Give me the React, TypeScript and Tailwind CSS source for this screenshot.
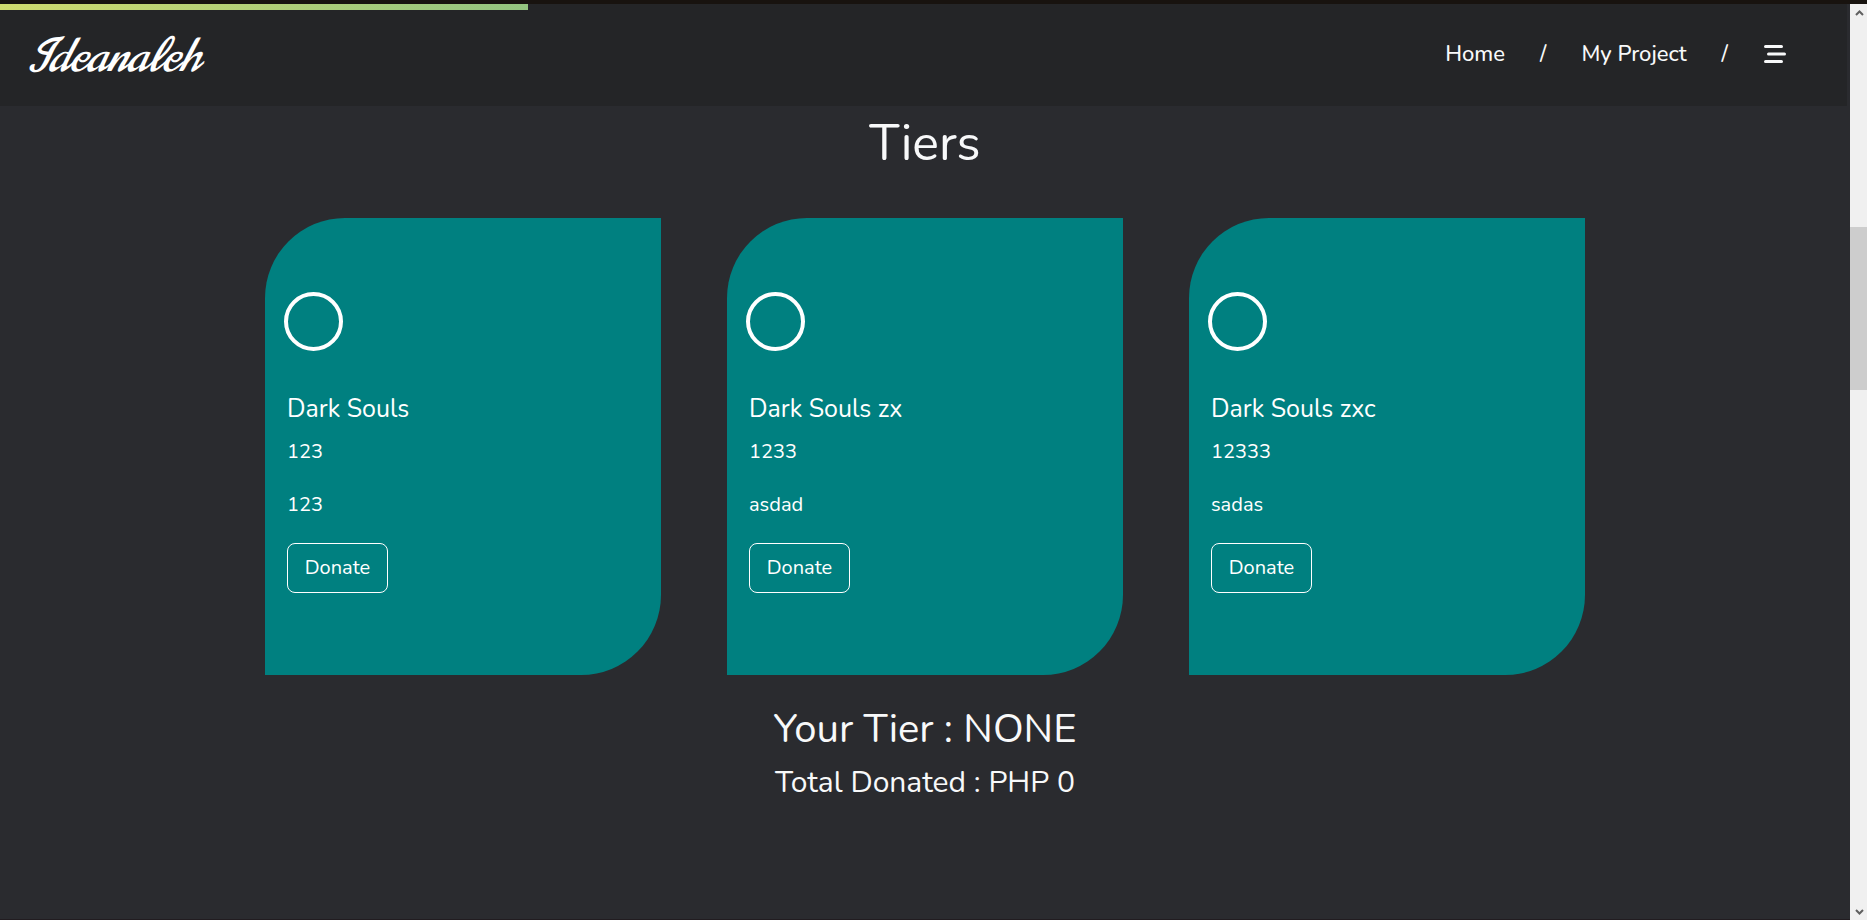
import React from "react";

type Tier = { name: string; amount: string; description: string };

const tiers: Tier[] = [
  { name: "Dark Souls", amount: "123", description: "123" },
  { name: "Dark Souls zx", amount: "1233", description: "asdad" },
  { name: "Dark Souls zxc", amount: "12333", description: "sadas" },
];

function MenuIcon() {
  return (
    <svg width="24" height="18" viewBox="0 0 24 18" aria-hidden="true" stroke="currentColor" strokeWidth="3" strokeLinecap="round">
      <path d="M2.5 1.5H18.5M5.5 9H21.5M2.5 16.5H18.5" />
    </svg>
  );
}

function Header() {
  return (
    <header className="mr-[3px] h-[102px] bg-[#242527]">
      <div className="h-[6px] w-[528px] bg-linear-to-r from-[#cfda6c] to-[#93c47f]" />
      <div className="flex items-center justify-between pt-[14px] pr-[60px] pl-6">
        <a
          href="#"
          className="pt-1 font-['Norican','Liberation_Serif',cursive] text-[47px] leading-[56px] text-white italic"
        >
          Ideanaleh
        </a>
        <nav className="flex items-center gap-[35px] text-[22px] leading-[60px] font-medium">
          <a href="#">Home</a>
          <span>/</span>
          <a href="#">My Project</a>
          <span>/</span>
          <button type="button" aria-label="Menu">
            <MenuIcon />
          </button>
        </nav>
      </div>
    </header>
  );
}

function TierCard({ tier }: { tier: Tier }) {
  return (
    <article className="rounded-tl-[80px] rounded-br-[80px] bg-[#008080] pt-[74px] pb-[82px] pl-[19px] text-white">
      <div className="size-[59px] rounded-full border-4 border-white" />
      <div className="pt-[42px] pl-[3px]">
        <h2 className="text-[25px] leading-[32px]">{tier.name}</h2>
        <p className="pt-3 text-[20px] leading-[30px]">{tier.amount}</p>
        <p className="pt-[23px] text-[20px] leading-[30px]">{tier.description}</p>
        <button
          type="button"
          className="mt-[23px] block h-[50px] w-[101px] rounded-lg border border-white text-[20px] leading-[30px]"
        >
          Donate
        </button>
      </div>
    </article>
  );
}

function Scrollbar() {
  return (
    <div className="flex w-[17px] flex-col items-center bg-[#f0f0f0] text-[#606060]" aria-hidden="true">
      <svg width="17" height="17" viewBox="0 0 17 17" fill="none" stroke="currentColor" strokeWidth="2">
        <path d="M6 11L9.500 7.500L13 11" />
      </svg>
      <div className="h-[206px]" />
      <div className="h-[163px] w-full bg-[#cdcdcd]" />
      <div className="grow" />
      <svg width="17" height="17" viewBox="0 0 17 17" fill="none" stroke="currentColor" strokeWidth="2">
        <path d="M6 7L9.500 10.500L13 7" />
      </svg>
    </div>
  );
}

export default function App() {
  return (
    <div className="flex min-h-screen flex-col border-t-4 border-[#18130f] bg-[#2a2b2f] font-['Nunito','Lato',sans-serif] font-normal text-[#f8f9fa]">
      <div className="flex grow">
        <div className="grow border-b border-[#211c20]">
          <Header />
          <main>
            <h1 className="pt-2 text-center text-[50px] leading-[60px]">Tiers</h1>
            <section className="mx-auto mt-11 grid max-w-[1320px] grid-cols-3 gap-[66px]">
              {tiers.map((tier) => (
                <TierCard key={tier.name} tier={tier} />
              ))}
            </section>
            <section className="pt-7 text-center">
              <h2 className="text-[40px] leading-[52px]">Your Tier : NONE</h2>
              <p className="pt-2 text-[30px] leading-[40px]">Total Donated : PHP 0</p>
            </section>
          </main>
        </div>
        <Scrollbar />
      </div>
    </div>
  );
}
